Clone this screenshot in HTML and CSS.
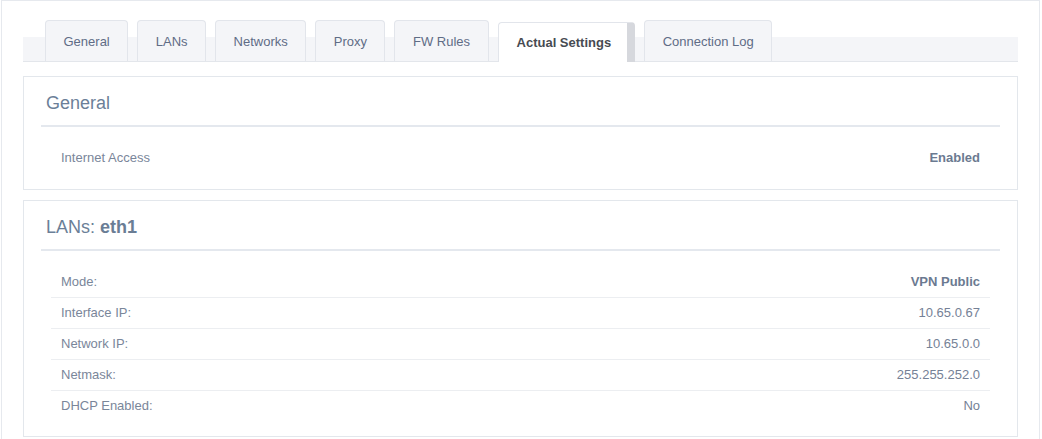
FILE: index.html
```html
<!DOCTYPE html>
<html>
<head>
<meta charset="utf-8">
<link rel="stylesheet" href="styles.css">
</head>
<body>
<div class="frame">
  <div class="tabbar">
    <div class="tab">General</div>
    <div class="tab">LANs</div>
    <div class="tab">Networks</div>
    <div class="tab">Proxy</div>
    <div class="tab">FW Rules</div>
    <div class="tab active">Actual Settings</div>
    <div class="tab">Connection Log</div>
  </div>

  <div class="panel first">
    <div class="panel-title">General</div>
    <div class="rows">
      <div class="row"><span class="label">Internet Access</span><span class="value strong">Enabled</span></div>
    </div>
  </div>

  <div class="panel">
    <div class="panel-title">LANs: <b>eth1</b></div>
    <div class="rows">
      <div class="row"><span class="label">Mode:</span><span class="value strong">VPN Public</span></div>
      <div class="row"><span class="label">Interface IP:</span><span class="value">10.65.0.67</span></div>
      <div class="row"><span class="label">Network IP:</span><span class="value">10.65.0.0</span></div>
      <div class="row"><span class="label">Netmask:</span><span class="value">255.255.252.0</span></div>
      <div class="row"><span class="label">DHCP Enabled:</span><span class="value">No</span></div>
    </div>
  </div>
</div>
</body>
</html>
```

FILE: styles.css
```css
html, body {
  margin: 0;
  padding: 0;
  background: #ffffff;
  font-family: "Liberation Sans", Arial, sans-serif;
}

.frame {
  margin-left: 1px;
  width: 1039px;
  box-sizing: border-box;
  border: 1px solid #e6e9ee;
  border-bottom: none;
  padding: 19px 21px 0 21px;
  height: 439px;
}

.tabbar {
  display: flex;
  gap: 9px;
  padding-left: 22px;
  height: 41px;
  border-bottom: 1px solid #e3e6eb;
  background: linear-gradient(to bottom, transparent 17px, #f4f5f8 17px);
}

.tab {
  box-sizing: border-box;
  height: 41px;
  padding: 1px 17.5px 0 17.5px;
  border: 1px solid #e2e5eb;
  border-bottom: none;
  border-radius: 4px 4px 0 0;
  background: #f4f5f8;
  color: #5f6c86;
  font-size: 13px;
  line-height: 39px;
  white-space: nowrap;
}

.tab.active {
  margin-top: 2px;
  height: 40px;
  background: #ffffff;
  color: #474b52;
  font-weight: bold;
  border-right: 8px solid #d6d8dd;
  padding-left: 18px;
  padding-right: 16px;
  line-height: 38px;
  position: relative;
  z-index: 1;
}

.panel {
  border: 1px solid #e3e7ec;
  padding: 0 17px 15px 17px;
  margin-top: 10px;
}

.panel.first {
  margin-top: 14px;
  padding-bottom: 16px;
}

.panel-title {
  padding: 15px 5px 11px 5px;
  line-height: 22px;
  font-size: 18px;
  color: #6b7f98;
  border-bottom: 2px solid #e4e8ee;
}

.panel-title b {
  font-weight: bold;
  color: #6a7d95;
}

.rows {
  margin: 16px 10px 0 10px;
}

.row {
  display: flex;
  justify-content: space-between;
  height: 30px;
  line-height: 30px;
  padding: 0 10px;
  font-size: 13px;
  color: #7a869a;
  border-bottom: 1px solid #eceef1;
}

.row:last-child {
  border-bottom: none;
}

.value {
  color: #758196;
}

.value.strong {
  font-weight: bold;
  color: #6b7a91;
}
```
